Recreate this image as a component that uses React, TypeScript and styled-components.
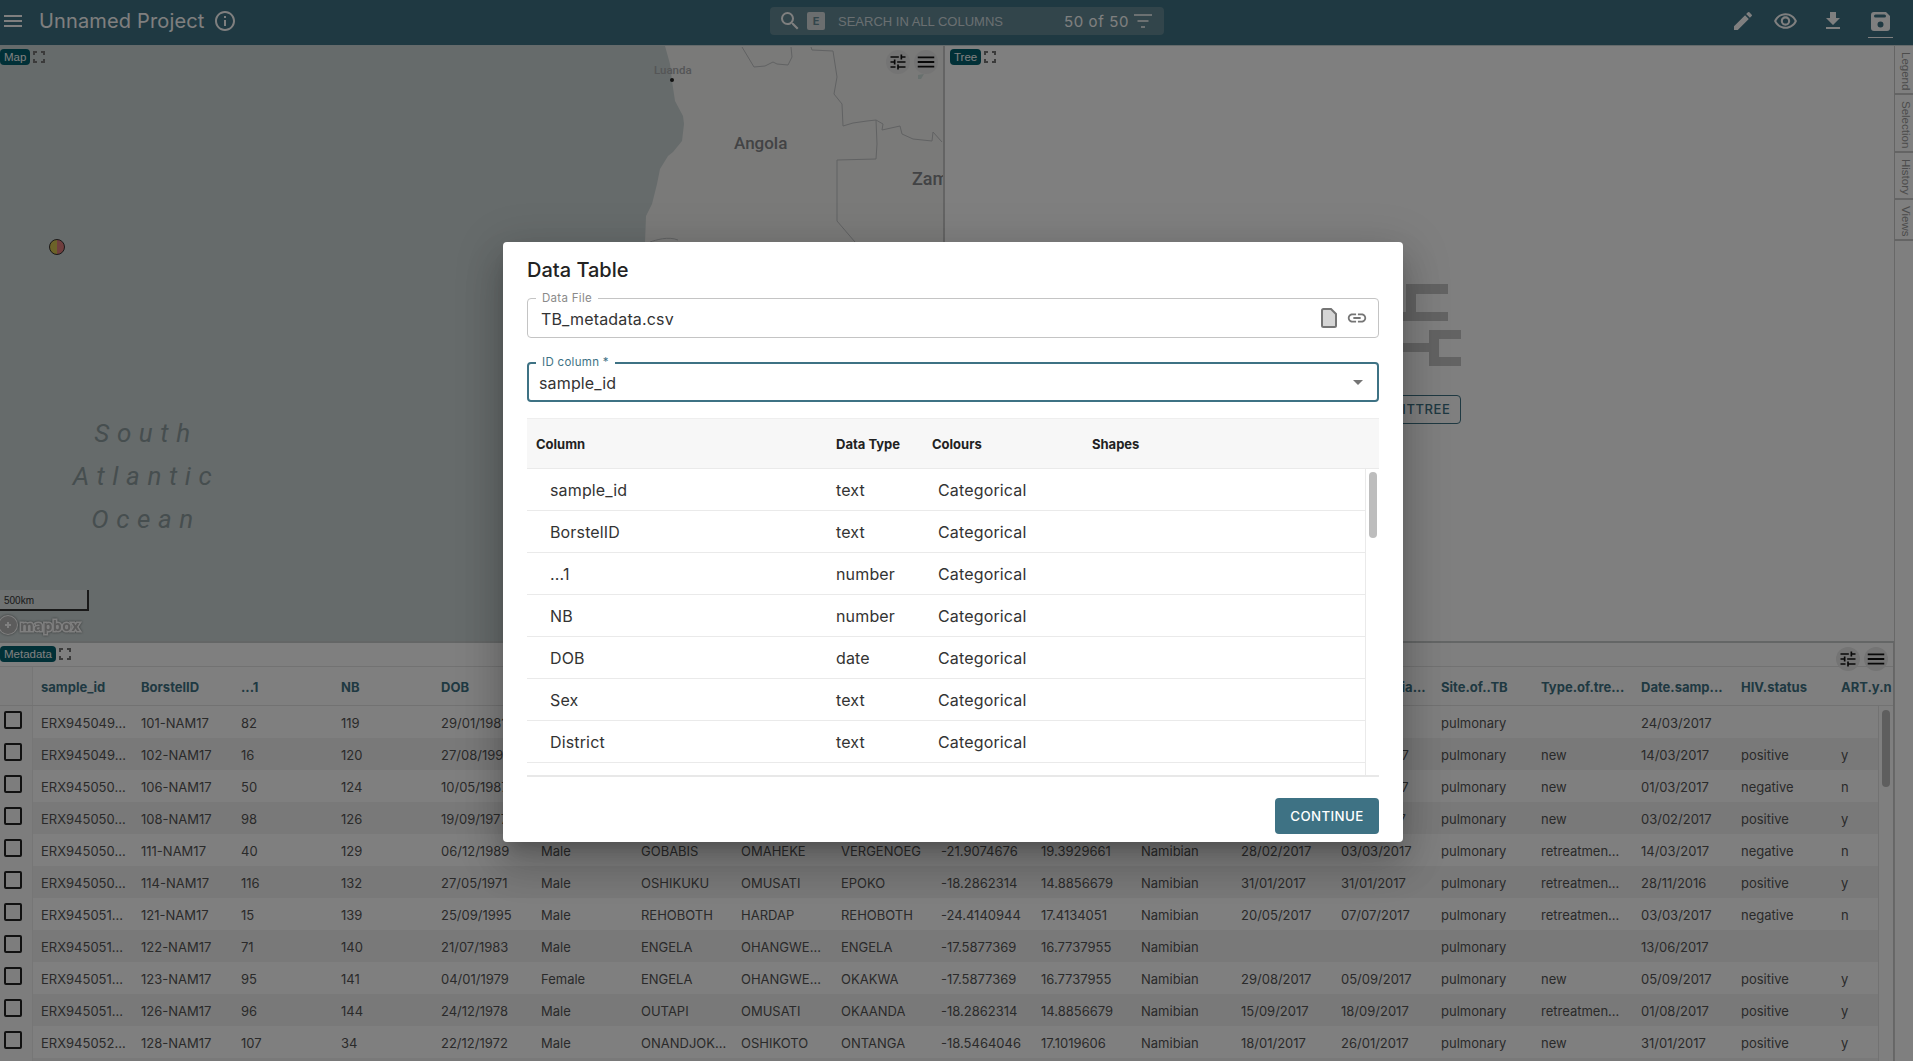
import React from 'react'
import styled, { createGlobalStyle } from 'styled-components'
import {
  MdMenu,
  MdInfoOutline,
  MdSearch,
  MdEdit,
  MdOutlineVisibility,
  MdFileDownload,
  MdTune,
  MdLink,
  MdArrowDropDown,
} from 'react-icons/md'

//// styles
const Global = createGlobalStyle`
  html, body { margin: 0; padding: 0; }
  body { font-family: Inter, "Open Sans", sans-serif; background: #fff; }
  * { box-sizing: border-box; }
`

const Page = styled.div`
  position: relative;
  width: 1913px;
  height: 1061px;
  overflow: hidden;
  display: flex;
  flex-direction: column;
`

const Header = styled.header`
  flex: 0 0 46px;
  display: flex;
  align-items: center;
  padding-bottom: 3px;
  background: #3e7284;
  border-bottom: 1px solid #c8d4d6;
  color: #fff;
`

const HeaderLeft = styled.div`
  flex: 0 0 770px;
  display: flex;
  align-items: center;
  padding-left: 1px;
  svg { flex: none; }
`

const ProjectName = styled.div`
  margin: 0 9px 0 14px;
  font-size: 20px;
  letter-spacing: 0.15px;
  color: #fff;
`

const SearchBox = styled.div`
  flex: 0 0 394px;
  height: 28px;
  display: flex;
  align-items: center;
  padding-left: 8px;
  border-radius: 4px;
  background: #648b96;
`

const ModeKey = styled.span`
  width: 18px;
  height: 18px;
  margin: 0 13px 0 5px;
  display: flex;
  align-items: center;
  justify-content: center;
  border-radius: 2px;
  background: #d6dcde;
  color: #648b96;
  font-size: 11px;
  font-weight: 700;
`

const SearchHint = styled.span`
  width: 226px;
  font-family: "Liberation Sans", sans-serif;
  font-size: 13px;
  color: #d4dfe2;
`

const Counter = styled.span`
  font-size: 15px;
  letter-spacing: 0.6px;
  color: #fff;
  margin-right: 5px;
`

const HeaderActions = styled.div`
  flex: 1;
  display: flex;
  align-items: center;
  justify-content: flex-end;
  padding-right: 13px;
  color: #fff;
`

const ActionSlot = styled.div<{ $width: number }>`
  width: ${p => p.$width}px;
  display: flex;
  justify-content: center;
`

const SaveAction = styled.div`
  position: relative;
  display: flex;
  &::after {
    content: '';
    position: absolute;
    left: -3px;
    right: -3px;
    bottom: -7px;
    height: 1px;
    background: #fff;
  }
`

const Main = styled.main`
  flex: 1;
  min-height: 0;
  display: flex;
`

const Work = styled.div`
  flex: 0 0 1894px;
  min-width: 0;
  display: flex;
  flex-direction: column;
`

const TopPanes = styled.div`
  flex: 0 0 597px;
  display: flex;
  border-bottom: 2px solid #c9cdcd;
`

const MapPane = styled.div`
  position: relative;
  flex: 0 0 945px;
  overflow: hidden;
  background: #ccd6d6;
  border-right: 2px solid #c9c9c9;
`

const MapDrawing = styled.svg`
  position: absolute;
  left: 0;
  top: 0;
`

const TreePane = styled.div`
  position: relative;
  flex: 1;
  display: flex;
  flex-direction: column;
  align-items: center;
  justify-content: center;
  gap: 29px;
  padding-top: 20px;
  background: #fff;
`

const TreeButton = styled.div`
  height: 29px;
  width: 82px;
  display: flex;
  align-items: center;
  justify-content: flex-end;
  padding-right: 9px;
  border: 1px solid #3e7284;
  border-radius: 4px;
  color: #3e7284;
  font-size: 13px;
  font-weight: 500;
  letter-spacing: 0.6px;
  white-space: nowrap;
`

const PaneTitle = styled.div<{ $left: number }>`
  position: absolute;
  left: ${p => p.$left}px;
  top: 3px;
  display: flex;
  align-items: center;
  gap: 3px;
  color: #999;
`

const Chip = styled.span`
  height: 16px;
  padding: 0 4px;
  display: flex;
  align-items: center;
  border-radius: 4px;
  background: #02606e;
  color: #fff;
  font-family: "Liberation Sans", sans-serif;
  font-size: 11.5px;
`

const PaneTools = styled.div`
  position: absolute;
  right: 5px;
  top: 4px;
  display: flex;
  gap: 4px;
  z-index: 2;
`

const RoundTool = styled.span`
  width: 24px;
  height: 24px;
  display: flex;
  align-items: center;
  justify-content: center;
  border-radius: 50%;
  background: #e8e8e8;
  color: #111;
`

const MapLabel = styled.span<{ $left: number; $top: number; $size: number; $color: string }>`
  position: absolute;
  left: ${p => p.$left}px;
  top: ${p => p.$top}px;
  font-family: Roboto, sans-serif;
  font-size: ${p => p.$size}px;
  font-weight: 500;
  line-height: 1;
  color: ${p => p.$color};
  white-space: nowrap;
`

const OceanLabel = styled.div`
  position: absolute;
  left: 36px;
  top: 366px;
  width: 220px;
  font-family: Roboto, sans-serif;
  font-size: 26px;
  font-style: italic;
  line-height: 43px;
  letter-spacing: 7.6px;
  text-align: center;
  color: #8d9c9e;
`

const ScaleBar = styled.div`
  position: absolute;
  left: 0;
  top: 544px;
  width: 89px;
  height: 21px;
  padding: 5px 0 0 4px;
  background: rgba(255, 255, 255, 0.35);
  border-right: 2px solid #333;
  border-bottom: 2px solid #333;
  font-family: "Liberation Sans", sans-serif;
  font-size: 10px;
  color: #333;
`

const MapboxMark = styled.div`
  position: absolute;
  left: -2px;
  top: 569px;
  display: flex;
  align-items: center;
  gap: 2px;
  font-family: "Open Sans", sans-serif;
  font-size: 14px;
  font-weight: 700;
  letter-spacing: 0.6px;
  color: #b8b8b8;
  -webkit-text-stroke: 3px #fff;
  paint-order: stroke fill;
  filter: drop-shadow(0 0 1px rgba(0, 0, 0, 0.5));
`

const MetadataPane = styled.div`
  position: relative;
  flex: 1;
  min-height: 0;
  overflow: hidden;
  background: #fff;
  border-right: 1px solid #ccc;
`

const MetadataBar = styled.div`
  height: 24px;
  border-bottom: 1px solid #e4e4e4;
`

const Row = styled.div<{ $shade?: boolean; $head?: boolean }>`
  display: grid;
  grid-template-columns: 33px repeat(19, 100px);
  height: ${p => (p.$head ? 39 : 32)}px;
  align-items: stretch;
  background: ${p => (p.$shade ? '#f3f3f3' : '#fff')};
  ${p => p.$head && 'border-bottom: 1px solid #e4e4e4;'}
`

const TickCell = styled.div`
  background: #fafafa;
  border-right: 1px solid #ececec;
  padding: 5px 0 0 4px;
`

const Tick = styled.span`
  display: block;
  width: 18px;
  height: 18px;
  border: 2px solid #222;
  border-radius: 2px;
`

const HeadCell = styled.div`
  display: flex;
  align-items: center;
  padding: 1px 0 0 8px;
  font-size: 13px;
  font-weight: 700;
  color: #3e7284;
  white-space: nowrap;
`

const Cell = styled.div`
  display: flex;
  align-items: center;
  padding-left: 8px;
  padding-top: 1px;
  font-size: 13px;
  color: #555;
  white-space: nowrap;
`

const RowsClip = styled.div`
  position: relative;
  width: 1879px;
  height: 360px;
  overflow: hidden;
  border-right: 1px solid #e4e4e4;
`

const TableThumb = styled.div`
  position: absolute;
  left: 1882px;
  top: 67px;
  width: 8px;
  height: 77px;
  border-radius: 4px;
  background: #bdbdbd;
`

const Sidebar = styled.aside`
  flex: 1;
  border-left: 1px solid #d0d0d0;
  background: #fff;
`

const SideTab = styled.div<{ $height: number }>`
  width: 20px;
  height: ${p => p.$height}px;
  padding: 6px 2px 0 0;
  border-bottom: 2px solid #c8c8c8;
  border-left: 1px solid #c8c8c8;
  margin-left: -1px;
  writing-mode: vertical-rl;
  font-family: "Liberation Sans", sans-serif;
  font-size: 11.5px;
  color: #999;
`

const Backdrop = styled.div`
  position: absolute;
  inset: 0;
  display: flex;
  align-items: center;
  justify-content: center;
  padding: 23px 7px 0 0;
  background: rgba(0, 0, 0, 0.5);
  z-index: 10;
`

const Dialog = styled.div`
  width: 900px;
  height: 600px;
  display: flex;
  flex-direction: column;
  padding: 16px 24px 8px;
  border-radius: 4px;
  background: #fff;
  color: #222;
  box-shadow: 0 11px 15px -7px rgba(0, 0, 0, 0.2), 0 24px 38px 3px rgba(0, 0, 0, 0.14),
    0 9px 46px 8px rgba(0, 0, 0, 0.12);
`

const DialogTitle = styled.h2`
  margin: 0 0 16px;
  height: 24px;
  line-height: 24px;
  font-size: 20px;
  font-weight: 500;
  color: #222;
`

const Field = styled.div<{ $focused?: boolean }>`
  position: relative;
  height: 40px;
  display: flex;
  align-items: center;
  margin-bottom: ${p => (p.$focused ? 16 : 24)}px;
  padding: 0 ${p => (p.$focused ? 7 : 10)}px 0 ${p => (p.$focused ? 10 : 13)}px;
  border: ${p => (p.$focused ? '2px solid #3e7284' : '1px solid #c4c4c4')};
  border-radius: 4px;
  font-size: 16px;
  letter-spacing: 0.15px;
  color: #333;
`

const FieldLabel = styled.label<{ $focused?: boolean }>`
  position: absolute;
  left: ${p => (p.$focused ? 7 : 8)}px;
  top: ${p => (p.$focused ? -9 : -8)}px;
  padding: 0 6px 0 6px;
  background: #fff;
  line-height: 14px;
  font-size: 11.5px;
  letter-spacing: 0.3px;
  color: ${p => (p.$focused ? '#3e7284' : '#8a8a8a')};
`

const FieldValue = styled.span`
  flex: 1;
  padding-top: 1px;
`

const FieldIcons = styled.span`
  display: flex;
  align-items: center;
  gap: 9px;
  color: #757575;
`

const ColumnsTable = styled.div`
  position: relative;
  height: 359px;
  overflow: hidden;
  border-bottom: 2px solid #e8e8e8;
`

const ColumnsHead = styled.div`
  height: 51px;
  display: grid;
  grid-template-columns: 300px 96px 160px 1fr;
  align-items: center;
  padding-left: 1px;
  background: #f7f7f7;
  border-top: 1px solid #eee;
  border-bottom: 1px solid #eaeaea;
  font-size: 13px;
  font-weight: 700;
  color: #222;
`

const HeadLabel = styled.span`
  padding-left: 8px;
`

const ColumnsBody = styled.div`
  width: 839px;
  border-right: 1px solid #eaeaea;
  height: 308px;
  overflow: hidden;
`

const ColumnRow = styled.div`
  height: 42px;
  display: grid;
  grid-template-columns: 301px 102px 1fr;
  align-items: center;
  border-bottom: 1px solid #eaeaea;
  font-size: 16px;
  letter-spacing: 0.15px;
  color: #333;
`

const ColumnName = styled.span`
  padding-left: 23px;
`

const ColumnText = styled.span`
  padding-left: 8px;
`

const ColumnThumb = styled.div`
  position: absolute;
  right: 2px;
  top: 54px;
  width: 8px;
  height: 66px;
  border-radius: 4px;
  background: #bdbdbd;
`

const DialogFooter = styled.div`
  flex: 1;
  display: flex;
  justify-content: flex-end;
  align-items: flex-start;
  padding-top: 21px;
`

const ContinueButton = styled.button`
  width: 104px;
  height: 36px;
  border: 0;
  border-radius: 4px;
  background: #3e7284;
  color: #fff;
  font-family: Inter, sans-serif;
  font-size: 13.3px;
  font-weight: 500;
  letter-spacing: 0.4px;
`

//// data
const tableColumns = [
  'sample_id', 'BorstelID', '...1', 'NB', 'DOB', 'Sex', 'District', 'Region', 'Town',
  'Latitude', 'Longitude', 'Nationality', 'Date.of.sym...', 'Date.of.tria...', 'Site.of..TB',
  'Type.of.tre...', 'Date.samp...', 'HIV.status', 'ART.y.n',
]

const tableRows = [
  ['ERX945049...', '101-NAM17', '82', '119', '29/01/1981', 'Male', 'WALVIS BAY', 'ERONGO', 'KUISEBMOND', '-22.9575', '14.5053', 'Namibian', '20/03/2017', '', 'pulmonary', '', '24/03/2017', '', ''],
  ['ERX945049...', '102-NAM17', '16', '120', '27/08/1990', 'Male', 'WALVIS BAY', 'ERONGO', 'NARRAVILLE', '-22.9575', '14.5053', 'Namibian', '09/03/2017', '10/03/2017', 'pulmonary', 'new', '14/03/2017', 'positive', 'y'],
  ['ERX945050...', '106-NAM17', '50', '124', '10/05/1987', 'Male', 'RUNDU', 'KAVANGO', 'RUNDU', '-17.9333', '19.7667', 'Namibian', '20/02/2017', '21/02/2017', 'pulmonary', 'new', '01/03/2017', 'negative', 'n'],
  ['ERX945050...', '108-NAM17', '98', '126', '19/09/1977', 'Male', 'KATIMA', 'ZAMBEZI', 'KATIMA', '-17.5000', '24.2667', 'Namibian', '30/01/2017', '31/01/2017', 'pulmonary', 'new', '03/02/2017', 'positive', 'y'],
  ['ERX945050...', '111-NAM17', '40', '129', '06/12/1989', 'Male', 'GOBABIS', 'OMAHEKE', 'VERGENOEG', '-21.9074676', '19.3929661', 'Namibian', '28/02/2017', '03/03/2017', 'pulmonary', 'retreatmen...', '14/03/2017', 'negative', 'n'],
  ['ERX945050...', '114-NAM17', '116', '132', '27/05/1971', 'Male', 'OSHIKUKU', 'OMUSATI', 'EPOKO', '-18.2862314', '14.8856679', 'Namibian', '31/01/2017', '31/01/2017', 'pulmonary', 'retreatmen...', '28/11/2016', 'positive', 'y'],
  ['ERX945051...', '121-NAM17', '15', '139', '25/09/1995', 'Male', 'REHOBOTH', 'HARDAP', 'REHOBOTH', '-24.4140944', '17.4134051', 'Namibian', '20/05/2017', '07/07/2017', 'pulmonary', 'retreatmen...', '03/03/2017', 'negative', 'n'],
  ['ERX945051...', '122-NAM17', '71', '140', '21/07/1983', 'Male', 'ENGELA', 'OHANGWE...', 'ENGELA', '-17.5877369', '16.7737955', 'Namibian', '', '', 'pulmonary', '', '13/06/2017', '', ''],
  ['ERX945051...', '123-NAM17', '95', '141', '04/01/1979', 'Female', 'ENGELA', 'OHANGWE...', 'OKAKWA', '-17.5877369', '16.7737955', 'Namibian', '29/08/2017', '05/09/2017', 'pulmonary', 'new', '05/09/2017', 'positive', 'y'],
  ['ERX945051...', '126-NAM17', '96', '144', '24/12/1978', 'Male', 'OUTAPI', 'OMUSATI', 'OKAANDA', '-18.2862314', '14.8856679', 'Namibian', '15/09/2017', '18/09/2017', 'pulmonary', 'retreatmen...', '01/08/2017', 'positive', 'y'],
  ['ERX945052...', '128-NAM17', '107', '34', '22/12/1972', 'Male', 'ONANDJOK...', 'OSHIKOTO', 'ONTANGA', '-18.5464046', '17.1019606', 'Namibian', '18/01/2017', '26/01/2017', 'pulmonary', 'new', '31/01/2017', 'positive', 'y'],
  Array(19).fill(''),
]

const columnRows = [
  ['sample_id', 'text'],
  ['BorstelID', 'text'],
  ['...1', 'number'],
  ['NB', 'number'],
  ['DOB', 'date'],
  ['Sex', 'text'],
  ['District', 'text'],
]

const sideTabs: [string, number][] = [['Legend', 49], ['Selection', 58], ['History', 47], ['Views', 41]]

//// drawings
const FullscreenMark = () => (
  <svg width="12" height="12" viewBox="0 0 12 12" fill="none" stroke="#777" strokeWidth="2">
    <path d="M1 4V1h3M8 1h3v3M11 8v3H8M4 11H1V8" />
  </svg>
)

const SaveIcon = () => (
  <svg width="19" height="19" viewBox="0 0 19 19" fill="#fff">
    <path
      fillRule="evenodd"
      d="M3 0h12l4 4v12a3 3 0 0 1-3 3H3a3 3 0 0 1-3-3V3a3 3 0 0 1 3-3zM4.500 2.500a1 1 0 0 0 0 3h9a1 1 0 0 0 0-3zM9.500 9.500a3 3 0 1 0 0 6 3 3 0 0 0 0-6z"
    />
  </svg>
)

const FilterLines = () => (
  <svg width="18" height="14" viewBox="0 0 18 14" stroke="#fff" strokeWidth="1.300">
    <path d="M0 1h18M3.500 7h11M7 13h4" />
  </svg>
)

const DocIcon = () => (
  <svg width="16" height="20" viewBox="0 0 16 20">
    <path
      d="M1 2.500a1.500 1.500 0 0 1 1.500-1.500H10l5 5v11.500a1.500 1.500 0 0 1-1.500 1.500h-11A1.500 1.500 0 0 1 1 17.500z"
      fill="#d6d6d6"
      stroke="#757575"
      strokeWidth="2"
    />
  </svg>
)

const TreeMark = () => (
  <svg width="82" height="82" viewBox="0 0 82 82" fill="#c6c6c6">
    <path d="M27 0h42v10H37v18h32v9H27zM50 46h32v9H60v18h22v9H50V68H25v-9h25z" />
    <path d="M0 28h27v9H12v22h13v9H2z" />
  </svg>
)

const MapShapes = () => (
  <MapDrawing width="943" height="595" viewBox="0 46 943 595">
    <path
      fill="#f4f4f2"
      d="M665 46L670 64L672 81L675 101L683 116L684 124L682 141L673 152L668 156L660 169L657 184L652 204L646 216L645 242V260H943V46Z"
    />
    <g fill="none" stroke="#c2c4c6" strokeWidth="1">
      <path d="M742 47L754 67L765 66L773 62L777 64L788 65L792 57L791 47" />
      <path d="M811 47L812 50L833 51L835 64L837 77L834 94L842 104L843 126L853 123L867 121L876 120L883 124L882 130L900 126L902 134L913 139L932 141L933 132L942 142" />
      <path d="M876 120L877 144L876 159L837 160L837 221L855 242" />
      <path d="M650 242C656 240 668 236 678 240" />
    </g>
    <path fill="#d0e0dc" d="M918 75l6-1-3 5-3 0z" />
    <circle cx="672" cy="80" r="2" fill="#222" />
    <circle cx="57" cy="247" r="7.500" fill="#e07c7c" />
    <path d="M57 239.500a7.500 7.500 0 0 0 0 15z" fill="#d8c450" />
    <circle cx="57" cy="247" r="7.500" fill="none" stroke="#333" strokeWidth="1" />
  </MapDrawing>
)

const MapboxBadge = () => (
  <svg width="20" height="20" viewBox="0 0 20 20">
    <circle cx="10" cy="10" r="9" fill="#b8b8b8" stroke="#fff" strokeWidth="2" />
    <path d="M7 10h6M10 7v6" stroke="#fff" strokeWidth="2" />
  </svg>
)

//// app
const App: React.FC = () => {
  return (
    <Page>
      <Global />
      <Header>
        <HeaderLeft>
          <MdMenu size={24} color="#fff" />
          <ProjectName>Unnamed Project</ProjectName>
          <MdInfoOutline size={24} color="#fff" />
        </HeaderLeft>
        <SearchBox>
          <MdSearch size={24} color="#fff" />
          <ModeKey>E</ModeKey>
          <SearchHint>SEARCH IN ALL COLUMNS</SearchHint>
          <Counter>50 of 50</Counter>
          <FilterLines />
        </SearchBox>
        <HeaderActions>
          <ActionSlot $width={42}><MdEdit size={24} /></ActionSlot>
          <ActionSlot $width={42}><MdOutlineVisibility size={25} /></ActionSlot>
          <ActionSlot $width={54}><MdFileDownload size={24} /></ActionSlot>
          <ActionSlot $width={40}>
            <SaveAction>
              <SaveIcon />
            </SaveAction>
          </ActionSlot>
        </HeaderActions>
      </Header>
      <Main>
        <Work>
          <TopPanes>
            <MapPane>
              <MapShapes />
              <MapLabel $left={654} $top={19} $size={11.5} $color="#aaacae">Luanda</MapLabel>
              <MapLabel $left={734} $top={89} $size={17} $color="#85878a">Angola</MapLabel>
              <MapLabel $left={912} $top={124} $size={18} $color="#85878a">Zambia</MapLabel>
              <OceanLabel>
                South
                <br />
                Atlantic
                <br />
                Ocean
              </OceanLabel>
              <ScaleBar>500km</ScaleBar>
              <MapboxMark>
                <MapboxBadge />
                mapbox
              </MapboxMark>
              <PaneTitle $left={0}>
                <Chip>Map</Chip>
                <FullscreenMark />
              </PaneTitle>
              <PaneTools>
                <RoundTool><MdTune size={20} /></RoundTool>
                <RoundTool><MdMenu size={22} /></RoundTool>
              </PaneTools>
            </MapPane>
            <TreePane>
              <PaneTitle $left={5}>
                <Chip>Tree</Chip>
                <FullscreenMark />
              </PaneTitle>
              <TreeMark />
              <TreeButton>EDITTREE</TreeButton>
            </TreePane>
          </TopPanes>
          <MetadataPane>
            <MetadataBar>
              <PaneTitle $left={0}>
                <Chip>Metadata</Chip>
                <FullscreenMark />
              </PaneTitle>
              <PaneTools>
                <RoundTool><MdTune size={20} /></RoundTool>
                <RoundTool><MdMenu size={22} /></RoundTool>
              </PaneTools>
            </MetadataBar>
            <Row $head>
              <TickCell />
              {tableColumns.map(name => (
                <HeadCell key={name}>{name}</HeadCell>
              ))}
            </Row>
            <RowsClip>
              {tableRows.map((row, i) => (
                <Row key={i} $shade={i % 2 === 1}>
                  <TickCell>{i < 11 && <Tick />}</TickCell>
                  {row.map((value, j) => (
                    <Cell key={j}>{value}</Cell>
                  ))}
                </Row>
              ))}
            </RowsClip>
            <TableThumb />
          </MetadataPane>
        </Work>
        <Sidebar>
          {sideTabs.map(([name, height]) => (
            <SideTab key={name} $height={height}>{name}</SideTab>
          ))}
        </Sidebar>
      </Main>
      <Backdrop>
        <Dialog>
          <DialogTitle>Data Table</DialogTitle>
          <Field>
            <FieldLabel>Data File</FieldLabel>
            <FieldValue>TB_metadata.csv</FieldValue>
            <FieldIcons>
              <DocIcon />
              <MdLink size={22} />
            </FieldIcons>
          </Field>
          <Field $focused>
            <FieldLabel $focused>ID column *</FieldLabel>
            <FieldValue>sample_id</FieldValue>
            <FieldIcons>
              <MdArrowDropDown size={24} />
            </FieldIcons>
          </Field>
          <ColumnsTable>
            <ColumnsHead>
              <HeadLabel>Column</HeadLabel>
              <HeadLabel>Data Type</HeadLabel>
              <HeadLabel>Colours</HeadLabel>
              <HeadLabel>Shapes</HeadLabel>
            </ColumnsHead>
            <ColumnsBody>
              {columnRows.map(([name, type]) => (
                <ColumnRow key={name}>
                  <ColumnName>{name}</ColumnName>
                  <ColumnText>{type}</ColumnText>
                  <ColumnText>Categorical</ColumnText>
                </ColumnRow>
              ))}
            </ColumnsBody>
            <ColumnThumb />
          </ColumnsTable>
          <DialogFooter>
            <ContinueButton>CONTINUE</ContinueButton>
          </DialogFooter>
        </Dialog>
      </Backdrop>
    </Page>
  )
}

export default App
